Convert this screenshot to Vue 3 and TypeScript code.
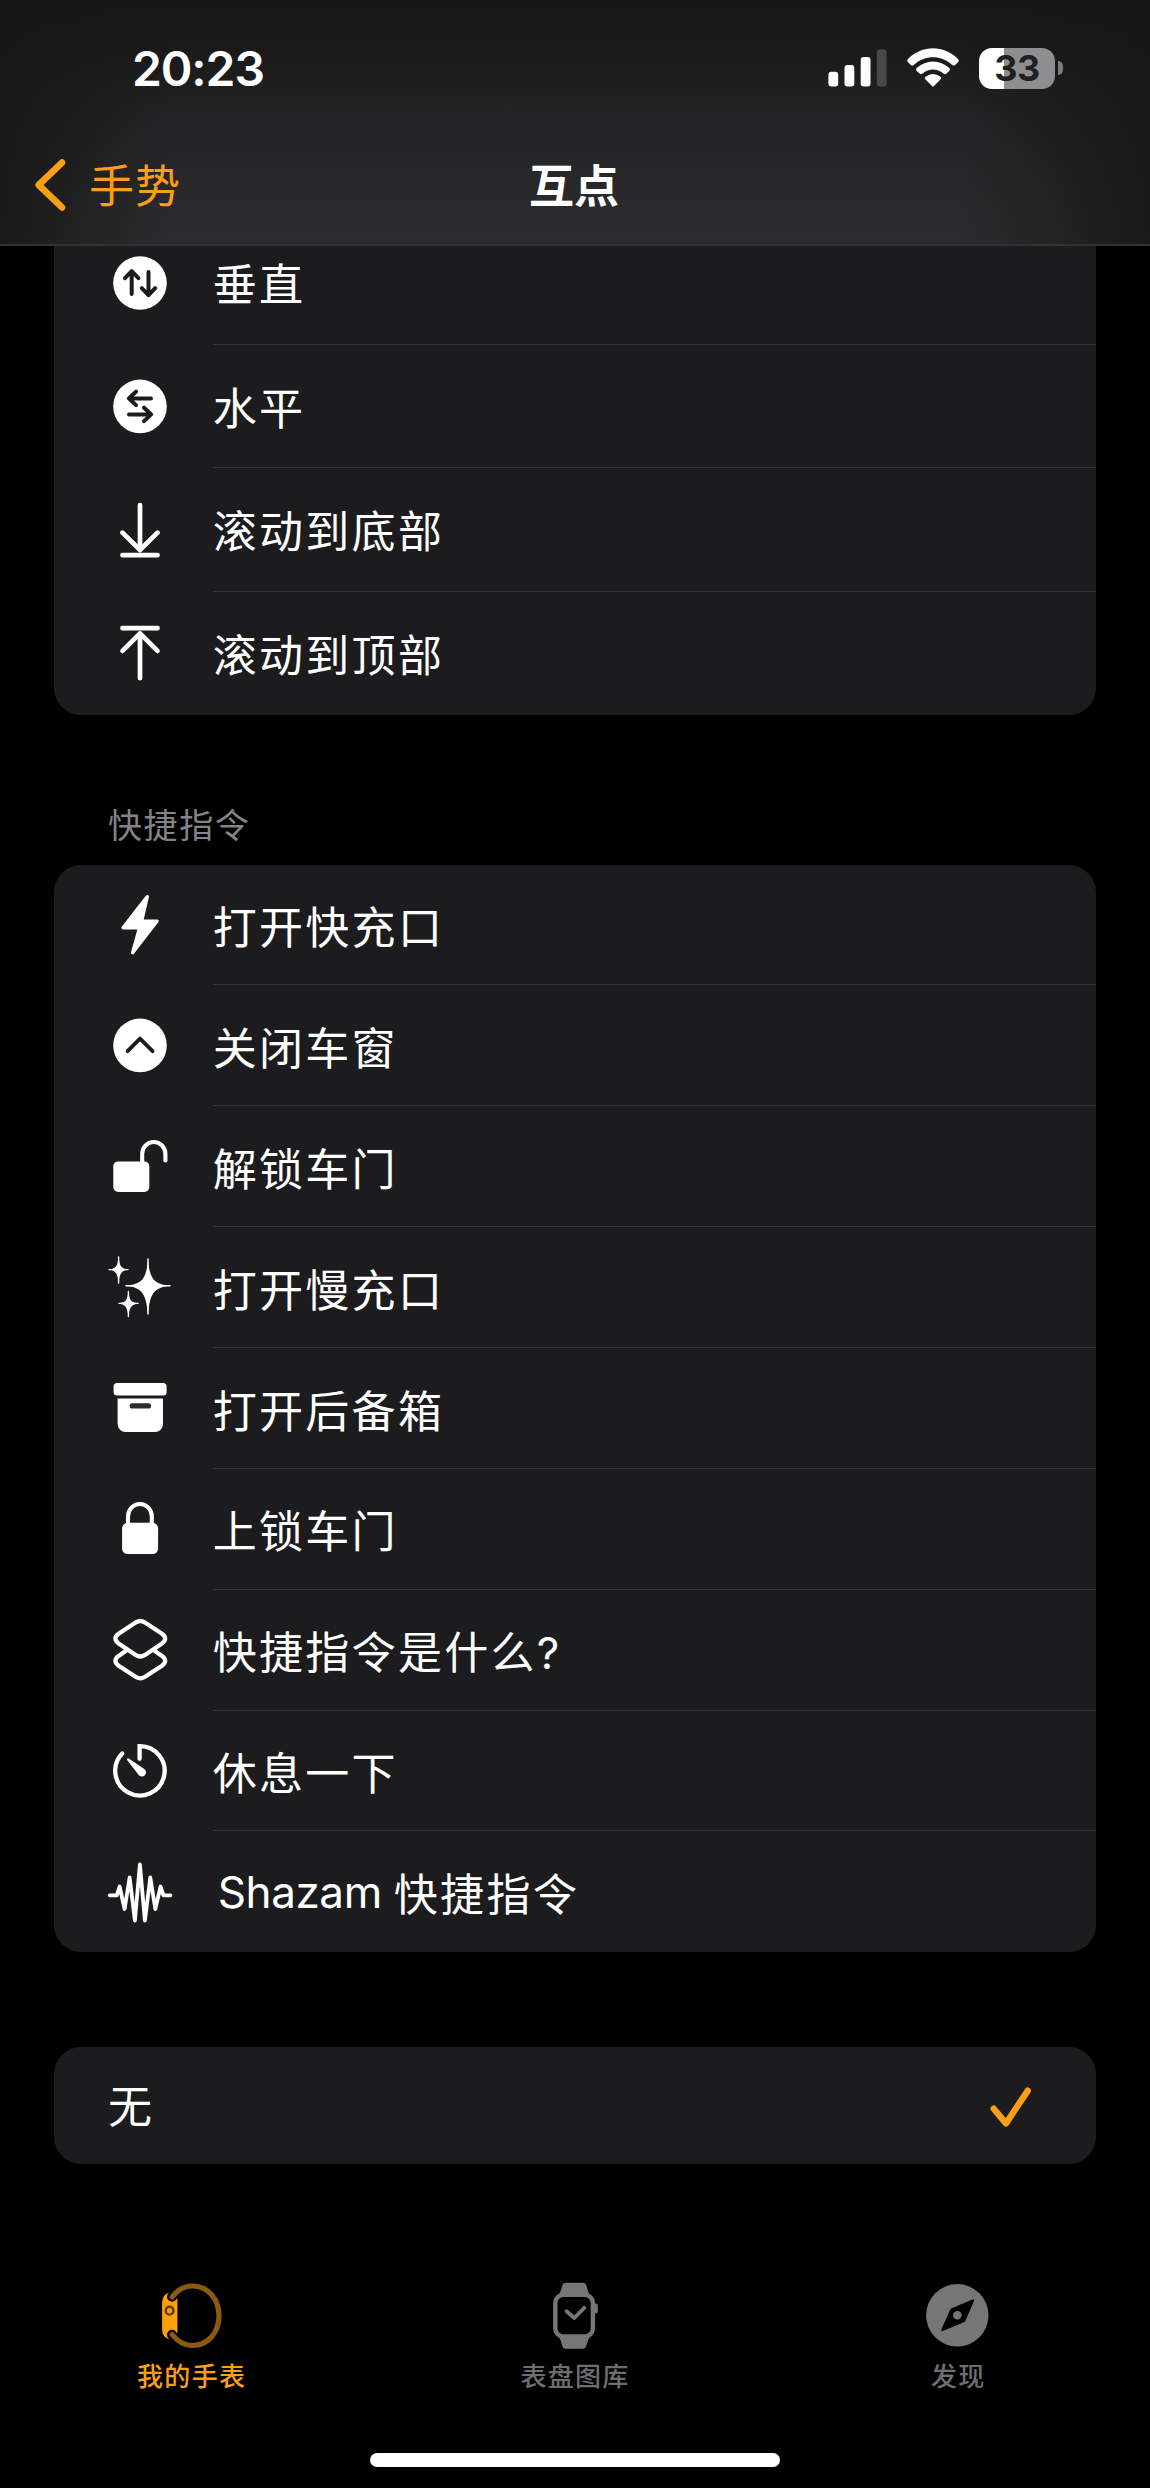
<script setup lang="ts">
interface Row {
  icon: string
  label: string
  latin?: string
}

const scrollRows: Row[] = [
  { icon: 'vertical', label: '垂直' },
  { icon: 'horizontal', label: '水平' },
  { icon: 'bottom', label: '滚动到底部' },
  { icon: 'top', label: '滚动到顶部' },
]

const shortcutRows: Row[] = [
  { icon: 'bolt', label: '打开快充口' },
  { icon: 'chevron', label: '关闭车窗' },
  { icon: 'unlock', label: '解锁车门' },
  { icon: 'sparkles', label: '打开慢充口' },
  { icon: 'archive', label: '打开后备箱' },
  { icon: 'lock', label: '上锁车门' },
  { icon: 'shortcuts', label: '快捷指令是什么?' },
  { icon: 'timer', label: '休息一下' },
  { icon: 'wave', latin: 'Shazam ', label: '快捷指令' },
]

const groups = [
  { id: 'scroll', rows: scrollRows },
  { id: 'shortcuts', title: '快捷指令', rows: shortcutRows },
]

// Inner markup of the 80x80 row icons
const icons: Record<string, string> = {
  vertical:
    '<circle cx="40" cy="40" r="26.8" fill="#fff"/><g fill="none" stroke="#1c1c1e" stroke-width="4" stroke-linecap="round" stroke-linejoin="round"><path d="M31.7 51V29M25 35.2l6.7-7 6.7 7M48.5 29v22M41.8 45.2l6.7 7 6.7-7"/></g>',
  horizontal:
    '<circle cx="40" cy="40.4" r="26.8" fill="#fff"/><g fill="none" stroke="#1c1c1e" stroke-width="4" stroke-linecap="round" stroke-linejoin="round"><path d="M51 32.4H29M36 25.7l-7.2 6.700 7.2 6.700M29 48.400h22M44 41.700l7.200 6.700-7.200 6.700"/></g>',
  bottom:
    '<path d="M40 15.2V60M22.5 42.7L40 60l17.5-17.3M22.5 65.2h35" fill="none" stroke="#fff" stroke-width="4.7" stroke-linecap="round" stroke-linejoin="round"/>',
  top:
    '<path d="M40 65.2V20.4M22.5 37.9L40 20.4l17.5 17.5M22.5 15.2h35" fill="none" stroke="#fff" stroke-width="4.7" stroke-linecap="round" stroke-linejoin="round"/>',
  bolt:
    '<path d="M47.3 11.6L23 42.7h16.6L32.6 67.6L57 36.2H41.6z" fill="#fff" stroke="#fff" stroke-width="3.4" stroke-linejoin="round"/>',
  chevron:
    '<circle cx="40" cy="39.4" r="26.8" fill="#fff"/><path d="M27.6 45.2L40 32.6l12.6 12.6" fill="none" stroke="#1c1c1e" stroke-width="3.8" stroke-linecap="round" stroke-linejoin="round"/>',
  unlock:
    '<rect x="13.3" y="34.4" width="36" height="30.5" rx="5" fill="#fff"/><path d="M42.2 36V26.8a11.6 11.8 0 0 1 23.2 0V33.4" fill="none" stroke="#fff" stroke-width="4.1" stroke-linecap="round"/>',
  sparkles:
    '<g fill="#fff"><path d="M48 10.5C49.6 31 53.5 36.6 71.3 37.7C53.5 38.8 49.6 46.5 48 67C46.4 46.5 42.5 38.8 24.6 37.7C42.5 36.6 46.4 31 48 10.5z"/><path d="M18.6 8C19.4 18 20.9 20.8 28.8 21.6C20.9 22.4 19.4 26 18.6 36C17.8 26 16.3 22.4 8.4 21.6C16.3 20.8 17.8 18 18.6 8z"/><path d="M28.4 42.5C29.2 51.8 30.7 54.6 38.6 55.4C30.7 56.2 29.2 60 28.4 69.8C27.6 60 26.1 56.2 18.2 55.4C26.1 54.6 27.6 51.8 28.4 42.5z"/></g><g fill="none" stroke="#fff" stroke-width="1.4" stroke-linecap="round"><path d="M48 11v55M26 37.7h44M18.6 9v26M9 21.6h19M28.4 43.5v25M19 55.4h19"/></g><path fill="#fff" d="M48 22Q50.500 35.200 60.500 37.700Q50.500 40.200 48 55Q45.500 40.200 35.500 37.700Q45.500 35.200 48 22z"/>',
  archive:
    '<rect x="13.6" y="15" width="53" height="12.6" rx="3.6" fill="#fff"/><path d="M17.6 30.4H63V56a8 8 0 0 1-8 8H25.6a8 8 0 0 1-8-8z" fill="#fff"/><rect x="29.6" y="35.3" width="21.4" height="5.2" rx="2.6" fill="#2c2c2e"/>',
  lock:
    '<rect x="22.1" y="33.8" width="36" height="31.2" rx="5.5" fill="#fff"/><path d="M28 36V27.5a11.9 12.5 0 0 1 23.8 0V36" fill="none" stroke="#fff" stroke-width="4.1"/>',
  shortcuts:
    '<g fill="none" stroke="#fff" stroke-width="4.3" stroke-linejoin="round"><path d="M36 12.3q4.3-2.600 8.600 0L62 23.700q6.400 4.800 0 9.800L44.600 45.200q-4.300 2.600-8.600 0L18.600 33.500q-6.400-5 0-9.800z"/><path d="M26.400 40.500L18.600 45.900q-6.400 5 0 9.800L36 67q4.300 2.700 8.600 0L62 55.700q6.400-4.800 0-9.800L54.200 40.500"/></g>',
  timer:
    '<path d="M39.6 28V15.300A24.700 24.700 0 1 1 22.200 22.800" transform="translate(0 -.2)" fill="none" stroke="#fff" stroke-width="4.300" stroke-linecap="round" stroke-linejoin="miter"/><path d="M27.300 29.200q-1-2.400 1.500-1.700L43.600 37.500a4.200 4.200 0 1 1-5.500 5.700z" fill="#fff"/>',
  wave:
    '<path d="M9.700 43.300h7.100L19.600 34.500 24.600 57 29.600 25.500 34.900 68.600 39.900 12.500 44.900 68.600 50.300 25.500 55.300 57 60.600 34.500 63.400 43.300h7.100" fill="none" stroke="#fff" stroke-width="3.800" stroke-linecap="round" stroke-linejoin="round"/>',
}
</script>

<template>
  <div class="screen">
    <header class="header">
      <div class="status">
        <span class="time">20:23</span>
        <div class="indicators">
          <svg class="signal" width="60" height="44" viewBox="0 0 60 44">
            <g fill="#fff">
              <rect x="1.4" y="25.7" width="9.8" height="14.8" rx="3" />
              <rect x="17.5" y="19" width="9.8" height="21.5" rx="3" />
              <rect x="33.7" y="11" width="9.8" height="29.5" rx="3" />
            </g>
            <rect x="49.8" y="3.3" width="9.8" height="37.2" rx="3" fill="#48484a" />
          </svg>
          <svg class="wifi" width="56" height="44" viewBox="0 0 56 44">
            <path fill="#fff" d="M3 16.2Q1.5 14.5 3 13C17-1.2 39-1.2 53 13Q54.5 14.5 53 16.2L50.2 18.9Q48.8 20.2 47.3 18.9C36 8.6 20 8.6 8.7 18.9Q7.2 20.2 5.8 18.9z" />
            <path fill="#fff" d="M11.7 24.9Q10.2 23.4 11.7 22C21 13.2 35 13.2 44.3 22Q45.8 23.4 44.3 24.9L41.4 27.6Q40 28.9 38.500 27.600C32 22 24 22 17.500 27.600Q16 28.900 14.600 27.600z" />
            <path fill="#fff" d="M20.3 33.3Q19 31.8 20.5 30.7Q28 25.2 35.5 30.7Q37 31.8 35.7 33.3L29 40Q28 41 27 40z" />
          </svg>
          <div class="battery"><span>33</span></div>
          <i class="nub"></i>
        </div>
      </div>
      <nav class="nav">
        <a class="back">
          <svg width="40" height="60" viewBox="0 0 40 60">
            <path d="M32 7.6L8.7 30 32 52.4" fill="none" stroke="#fa9f16" stroke-width="6.6" stroke-linecap="round" stroke-linejoin="round" />
          </svg>
          <span>手势</span>
        </a>
        <h1>互点</h1>
        <span></span>
      </nav>
    </header>

    <main>
      <section v-for="g in groups" :key="g.id" :class="g.id">
        <h2 v-if="g.title">{{ g.title }}</h2>
        <ul class="card">
          <li v-for="r in g.rows" :key="r.label" class="row">
            <svg class="icon" width="80" height="80" viewBox="0 0 80 80" v-html="icons[r.icon]"></svg>
            <div class="cell"><span v-if="r.latin" class="latin">{{ r.latin }}</span><span>{{ r.label }}</span></div>
          </li>
        </ul>
      </section>
      <section class="card none">
        <span>无</span>
        <svg width="50" height="50" viewBox="0 0 50 50">
          <path d="M8.7 27.7L21 42.4 42.7 9.7" fill="none" stroke="#fa9f16" stroke-width="6.4" stroke-linecap="round" stroke-linejoin="round" />
        </svg>
      </section>
    </main>

    <footer class="tabs">
      <a class="tab active">
        <svg width="80" height="72" viewBox="0 0 80 72">
          <path fill="#ff9f0a" d="M17 12.7Q10.1 14.5 10.1 23V49Q10.1 57 17 59L25.4 53V19z" />
          <g fill="none" stroke-linecap="round">
            <path stroke="#000" stroke-width="10" d="M20.2 16.5l-.2.2M20.2 55l-.2-.2" />
            <path stroke="#8a5a10" stroke-width="5.2" d="M20.2 17C25.5 10 32 6 40 6C57 6 67 20 67 35.7S57 65.5 40 65.5C32 65.5 25.5 61.5 20.2 54.5" />
          </g>
          <circle cx="17.6" cy="30.7" r="3.9" fill="#ff9f0a" stroke="#5c3905" stroke-width="2.4" />
        </svg>
        <span>我的手表</span>
      </a>
      <a class="tab">
        <svg width="80" height="72" viewBox="0 0 80 72">
          <g fill="#767676">
            <path d="M30.3 2.7h18q2.4 0 3 2.6l1.8 6.2q.8 2.3 4 5.2H21.5q3.2-2.9 4-5.2l1.8-6.2q.6-2.6 3-2.600z" />
            <path d="M30.3 68.7h18q2.4 0 3-2.6l1.8-6.2q.8-2.3 4-5.2H21.5q3.2 2.9 4 5.2l1.800 6.200q.6 2.600 3 2.600z" />
            <path d="M60 23.5h.5q2.3 0 2.3 2.3v5.4q0 2.3-2.3 2.3H60z" />
          </g>
          <rect x="20.3" y="14.9" width="37.6" height="41.6" rx="8" fill="#000" stroke="#767676" stroke-width="4.4" />
          <path d="M31.5 31.3l7.8 6.7L49.3 27.8" fill="none" stroke="#767676" stroke-width="3.8" stroke-linecap="round" stroke-linejoin="round" />
        </svg>
        <span>表盘图库</span>
      </a>
      <a class="tab">
        <svg width="80" height="72" viewBox="0 0 80 72">
          <circle cx="39.3" cy="35.3" r="31.2" fill="#767676" />
          <path d="M55 20.5L33.5 29.5 24.3 50 46 41z" fill="#000" stroke="#000" stroke-width="2.2" stroke-linejoin="round" />
          <circle cx="39.3" cy="35.3" r="4.3" fill="#767676" />
        </svg>
        <span>发现</span>
      </a>
    </footer>
    <div class="home"></div>
  </div>
</template>

<style>
body {
  background: #000;
}
</style>

<style scoped>
.screen {
  width: 1150px;
  height: 2488px;
  box-sizing: border-box;
  display: flex;
  flex-direction: column;
  overflow: hidden;
  background: #000;
  color: #fff;
  font-family: Inter, "Noto Sans CJK SC", sans-serif;
}

.header {
  height: 246px;
  flex: none;
  box-sizing: border-box;
  border-bottom: 2px solid #323234;
  background:
    linear-gradient(90deg, rgba(22, 22, 22, 0.85) 0, rgba(24, 24, 25, 0) 170px, rgba(24, 24, 25, 0) 960px, rgba(22, 22, 22, 0.85) 1150px),
    linear-gradient(180deg, #161616 0, #1a1a1a 50px, #222224 110px, #2a2a2c 200px, #2c2c2e 244px);
}

.status {
  height: 136px;
  display: flex;
  justify-content: space-between;
  padding: 0 87px 0 132px;
}

.time {
  line-height: 138px;
  font-size: 48px;
  font-weight: 600;
  letter-spacing: -1.1px;
}

.indicators {
  display: flex;
  align-items: center;
}

.signal {
  margin-right: 18px;
}

.wifi {
  margin-right: 18px;
}

.battery {
  width: 76px;
  height: 41px;
  border-radius: 13px;
  background: linear-gradient(90deg, #fff 25px, #8e8e90 25.5px);
  color: #202022;
  font-size: 36px;
  font-weight: 700;
  letter-spacing: -0.5px;
  line-height: 41px;
  text-align: center;
}

.nub {
  width: 5px;
  height: 14px;
  margin-left: 3px;
  border-radius: 0 5px 5px 0;
  background: #7c7c7e;
}

.nav {
  height: 98px;
  display: grid;
  grid-template-columns: 1fr auto 1fr;
  align-items: center;
}

.back {
  display: flex;
  align-items: center;
  padding-left: 30px;
  color: #fa9f16;
  font-size: 45px;
  letter-spacing: 1px;
}

.back span {
  margin-left: 19px;
  padding-bottom: 4px;
}

h1 {
  margin: 0;
  padding: 0 2px 4px 0;
  font-size: 45px;
  font-weight: 600;
}

.card {
  margin: 0 54px;
  padding: 0;
  list-style: none;
  border-radius: 27px;
  background: #1c1c1e;
  overflow: hidden;
}

.row {
  height: 120.86px;
  display: flex;
  align-items: center;
}

.icon {
  flex: none;
  margin: 0 33px 0 45.7px;
}

.cell {
  flex: 1;
  height: 100%;
  box-sizing: border-box;
  display: flex;
  align-items: center;
  padding-top: 1.5px;
  border-bottom: 1.5px solid #343436;
  font-size: 44px;
  letter-spacing: 2.3px;
  white-space: pre;
}

.row:last-child .cell {
  border-bottom-color: transparent;
}

.cell .latin {
  margin-left: 5px;
  letter-spacing: -0.4px;
}

.scroll .card {
  height: 469px;
  display: flex;
  flex-direction: column;
  justify-content: flex-end;
  border-radius: 0 0 27px 27px;
}

.scroll .row {
  height: 123.5px;
  flex: none;
}

.scroll .cell {
  padding-top: 0;
}

h2 {
  margin: 0;
  height: 149.5px;
  padding: 86px 0 0 108px;
  box-sizing: border-box;
  font-size: 34px;
  line-height: 50px;
  font-weight: 400;
  letter-spacing: 1.6px;
  color: #848486;
}

.none {
  height: 117.6px;
  margin-top: 94.5px;
  padding: 0 61px 0 54px;
  display: flex;
  align-items: center;
  justify-content: space-between;
  font-size: 44px;
}

.none span {
  padding-bottom: 3px;
}

.tabs {
  display: flex;
  margin-top: 115.7px;
}

.tab {
  flex: 1;
  display: flex;
  flex-direction: column;
  align-items: center;
  color: #6e6e70;
  font-size: 26px;
  line-height: 40px;
  font-weight: 500;
  letter-spacing: 1.3px;
}

.tab span {
  margin-top: 5px;
}

.tab.active {
  color: #fa9f16;
}

.home {
  width: 410px;
  height: 14px;
  margin: 56px auto 0;
  border-radius: 7px;
  background: #fff;
}
</style>
